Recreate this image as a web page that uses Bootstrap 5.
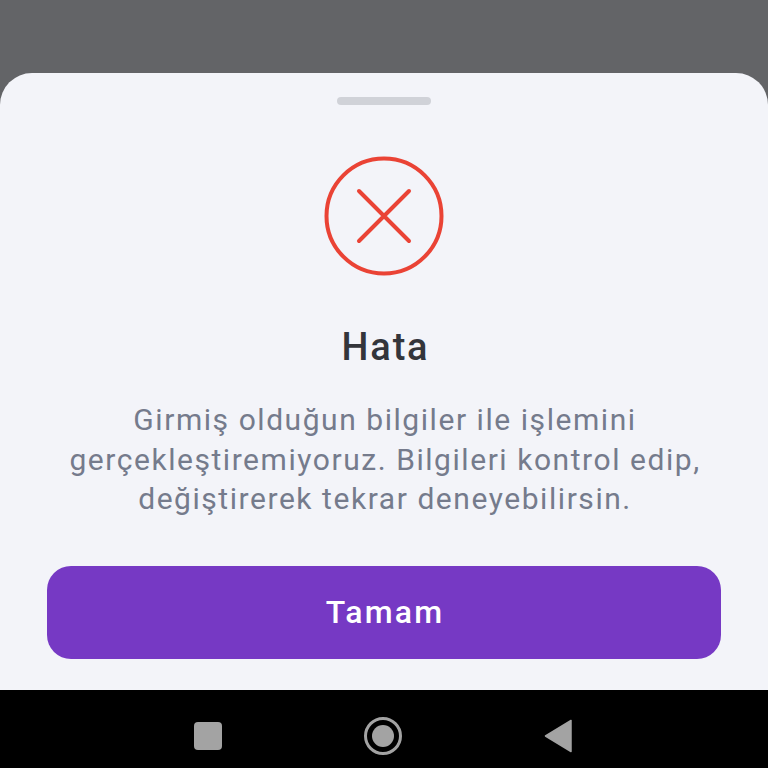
<!DOCTYPE html>
<html lang="tr">
<head>
  <meta charset="UTF-8" />
  <meta name="viewport" content="width=device-width, initial-scale=1" />
  <title>Hata</title>
  <link href="https://cdn.jsdelivr.net/npm/bootstrap@5.3.0/dist/css/bootstrap.min.css" rel="stylesheet" />
  <style>
    html, body { height: 100%; }
    body {
      background: #636467;
      font-family: Roboto, "Liberation Sans", sans-serif;
      overflow: hidden;
    }
    .ekran { height: 768px; padding-top: 73px; }
    .sayfa {
      background: #f3f4f9;
      border-radius: 32px 32px 0 0;
      padding: 24px 47px 0;
      height: 617px;
    }
    .tutamac {
      width: 94px;
      height: 8px;
      border-radius: 4px;
      background: #d0d2d8;
      margin-bottom: 51px;
    }
    .hata-ikon { width: 120px; height: 120px; display: block; margin-bottom: 50px; }
    .baslik {
      font-size: 38px;
      line-height: 42px;
      font-weight: 500;
      letter-spacing: 1.8px;
      color: #33353b;
      margin: 0 0 32px;
      padding-left: 3px;
    }
    .mesaj {
      font-size: 30px;
      line-height: 39.5px;
      letter-spacing: 1.55px;
      color: #757b8c;
      margin: 0 -20px 47px;
      padding-left: 2px;
    }
    .btn-tamam {
      height: 93px;
      border: 0;
      border-radius: 24px;
      background: #7639c4;
      color: #fff;
      font-size: 32px;
      font-weight: 500;
      letter-spacing: 2.2px;
      padding-left: 14px;
    }
    .btn-tamam:hover { background: #7639c4; color: #fff; }
    .alt-bar { height: 78px; background: #000; padding-top: 14px; }
    .alt-bar svg { display: block; }
    .alt-ikonlar { width: 381px; margin-left: -2px; }
  </style>
</head>
<body>
  <div class="ekran d-flex flex-column">
    <div class="sayfa d-flex flex-column align-items-center text-center">
      <div class="tutamac"></div>
      <svg class="hata-ikon" viewBox="0 0 120 120" fill="none" stroke="#ea4335">
        <circle cx="60" cy="60" r="57.500" stroke-width="4" />
        <path d="M35 35 85 85M85 35 35 85" stroke-width="4" stroke-linecap="round" />
      </svg>
      <h1 class="baslik">Hata</h1>
      <p class="mesaj">Girmiş olduğun bilgiler ile işlemini gerçekleştiremiyoruz. Bilgileri kontrol edip, değiştirerek tekrar deneyebilirsin.</p>
      <button type="button" class="btn btn-tamam w-100">Tamam</button>
    </div>
    <div class="alt-bar d-flex justify-content-center align-items-center">
      <div class="alt-ikonlar d-flex justify-content-between align-items-center">
        <svg width="30" height="30" viewBox="0 0 30 30"><rect x="1" y="1" width="28" height="28" rx="4" fill="#a3a3a3" /></svg>
        <svg width="40" height="40" viewBox="0 0 40 40" fill="#a3a3a3"><circle cx="20" cy="20" r="17.500" fill="none" stroke="#a3a3a3" stroke-width="3" /><circle cx="20" cy="20" r="11" /></svg>
        <svg width="30" height="34" viewBox="0 0 30 34"><path d="M27 1.500V32.500L1.500 17Z" fill="#a3a3a3" stroke="#a3a3a3" stroke-width="1.500" stroke-linejoin="round" /></svg>
      </div>
    </div>
  </div>
  <script src="https://cdn.jsdelivr.net/npm/bootstrap@5.3.0/dist/js/bootstrap.bundle.min.js"></script>
</body>
</html>
